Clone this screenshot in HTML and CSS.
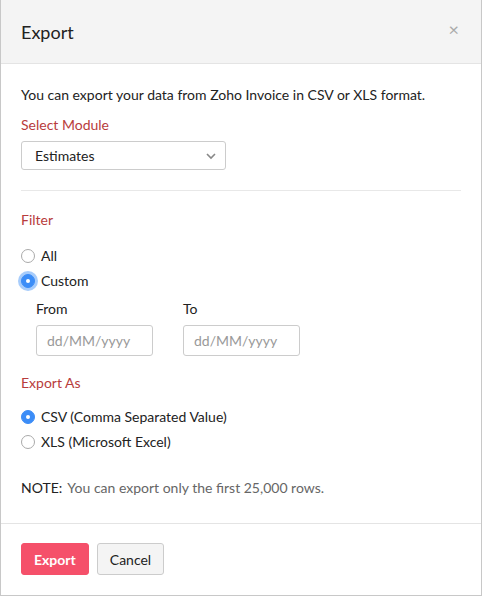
FILE: index.html
```html
<!DOCTYPE html>
<html lang="en">
<head>
<meta charset="UTF-8">
<meta name="viewport" content="width=device-width, initial-scale=1.0">
<title>Export</title>
<link rel="stylesheet" href="styles.css">
</head>
<body>

<div class="dialog">
  <div class="dialog-header">
    <h3>Export</h3>
    <span class="close">&times;</span>
  </div>

  <div class="dialog-body">
    <p class="intro">You can export your data from Zoho Invoice in CSV or XLS format.</p>

    <div class="label-red">Select Module</div>
    <div class="select">
      <span>Estimates</span>
      <svg width="12" height="8" viewBox="0 0 12 8"><path d="M2 2 L6 6 L10 2" fill="none" stroke="#888" stroke-width="1.6"/></svg>
    </div>

    <div class="divider"></div>

    <div class="label-red filter-label">Filter</div>
    <div class="radio-row"><span class="radio"></span>All</div>
    <div class="radio-row"><span class="radio checked focus"></span>Custom</div>

    <div class="dates">
      <div class="date-field">
        <label>From</label>
        <div class="date-input">dd/MM/yyyy</div>
      </div>
      <div class="date-field">
        <label>To</label>
        <div class="date-input">dd/MM/yyyy</div>
      </div>
    </div>

    <div class="label-red export-label">Export As</div>
    <div class="radio-row"><span class="radio checked"></span>CSV (Comma Separated Value)</div>
    <div class="radio-row"><span class="radio"></span>XLS (Microsoft Excel)</div>

    <p class="note"><b>NOTE:</b> You can export only the first 25,000 rows.</p>
  </div>

  <div class="dialog-footer">
    <button class="btn btn-primary">Export</button>
    <button class="btn">Cancel</button>
  </div>
</div>

</body>
</html>
```

FILE: styles.css
```css
body {
  margin: 0;
  font-family: Lato, "Open Sans", sans-serif;
  font-size: 14px;
  color: #222;
}
.dialog {
  width: 482px;
  height: 596px;
  box-sizing: border-box;
  border: 1px solid #c8c8c8;
  border-top: none;
  background: #fff;
}
.dialog-header {
  height: 64px;
  box-sizing: border-box;
  background: #f4f4f4;
  border-bottom: 1px solid #e4e4e4;
  display: flex;
  align-items: center;
  justify-content: space-between;
  padding: 0 20px;
}
.dialog-header h3 {
  margin: 0;
  font-size: 18px;
  font-weight: normal;
  color: #222;
}
.close {
  color: #aaa;
  font-size: 18px;
  margin-right: 2px;
  margin-top: -6px;
}
.dialog-body {
  padding: 21px 20px 25px;
}
.intro {
  margin: 0;
  line-height: 20px;
}
.label-red {
  color: #b83c3c;
  line-height: 20px;
  margin-top: 10px;
}
.select {
  width: 205px;
  height: 29px;
  box-sizing: border-box;
  margin-top: 6px;
  border: 1px solid #ccc;
  border-radius: 3px;
  display: flex;
  align-items: center;
  justify-content: space-between;
  padding: 0 8px 0 13px;
}
.divider {
  height: 1px;
  background: #e8e8e8;
  margin-top: 20px;
}
.filter-label {
  margin-top: 19px;
  margin-bottom: 13px;
}
.radio-row {
  height: 25px;
  display: flex;
  align-items: center;
}
.radio {
  width: 14px;
  height: 14px;
  box-sizing: border-box;
  border: 1px solid #aaa;
  border-radius: 50%;
  margin-right: 6px;
  position: relative;
  background: #fff;
}
.radio.checked {
  background: #3c8df7;
  border-color: #3c8df7;
}
.radio.checked::after {
  content: "";
  position: absolute;
  left: 4px;
  top: 4px;
  width: 4px;
  height: 4px;
  border-radius: 50%;
  background: #fff;
}
.radio.focus {
  box-shadow: 0 0 0 3px rgba(60, 141, 247, 0.45);
}
.dates {
  display: flex;
  gap: 30px;
  padding-left: 15px;
  margin-top: 6px;
}
.date-field label {
  display: block;
  line-height: 20px;
}
.date-input {
  width: 117px;
  height: 31px;
  box-sizing: border-box;
  margin-top: 6px;
  border: 1px solid #ccc;
  border-radius: 3px;
  padding: 0 10px;
  line-height: 29px;
  color: #999;
}
.export-label {
  margin-top: 17px;
  margin-bottom: 11px;
}
.note {
  margin: 24px 0 0;
  line-height: 20px;
  color: #666;
}
.note b {
  font-weight: normal;
  color: #222;
  margin-right: 2px;
}
.dialog-footer {
  border-top: 1px solid #e4e4e4;
  padding: 19px 20px;
  display: flex;
  gap: 8px;
}
.btn {
  height: 32px;
  padding: 0 12px;
  font-family: inherit;
  font-size: 14px;
  border: 1px solid #ccc;
  background: #f4f4f4;
  color: #222;
  border-radius: 3px;
}
.btn-primary {
  background: #f5506a;
  border-color: #f5506a;
  color: #fff;
  font-weight: bold;
}
```
